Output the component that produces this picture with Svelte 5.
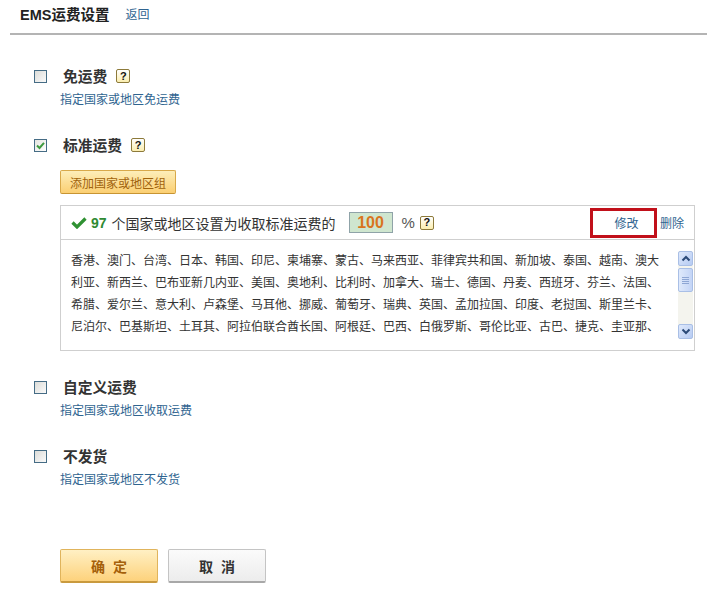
<script>
	const countries = '香港、澳门、台湾、日本、韩国、印尼、柬埔寨、蒙古、马来西亚、菲律宾共和国、新加坡、泰国、越南、澳大利亚、新西兰、巴布亚新几内亚、美国、奥地利、比利时、加拿大、瑞士、德国、丹麦、西班牙、芬兰、法国、希腊、爱尔兰、意大利、卢森堡、马耳他、挪威、葡萄牙、瑞典、英国、孟加拉国、印度、老挝国、斯里兰卡、尼泊尔、巴基斯坦、土耳其、阿拉伯联合酋长国、阿根廷、巴西、白俄罗斯、哥伦比亚、古巴、捷克、圭亚那、';
</script>

<div class="page">
	<header class="top">
		<h1>EMS运费设置</h1>
		<a href="#back">返回</a>
	</header>

	<section class="option">
		<div class="row">
			<span class="check"></span>
			<strong>免运费</strong>
			<span class="help">?</span>
		</div>
		<a class="desc" href="#free">指定国家或地区免运费</a>
	</section>

	<section class="option standard">
		<div class="row">
			<span class="check on">
				<svg viewBox="0 0 11 11" width="11" height="11"><path d="M2 5.5 4.5 8 9 2.8" fill="none" stroke="#3f9a3f" stroke-width="2" /></svg>
			</span>
			<strong>标准运费</strong>
			<span class="help">?</span>
		</div>
		<button class="add">添加国家或地区组</button>
		<div class="panel">
			<div class="panel-head">
				<svg class="tick" viewBox="0 0 16 13" width="16" height="13"><path d="M1.5 6.5 6 11 14.5 2.5" fill="none" stroke="#2f9132" stroke-width="3.2" /></svg>
				<b class="count">97</b>
				<span class="summary">个国家或地区设置为收取标准运费的</span>
				<span class="rate">100</span>
				<span class="pct">%</span>
				<span class="help">?</span>
				<a class="edit" href="#edit">修改</a>
				<a class="del" href="#delete">删除</a>
			</div>
			<div class="panel-body">
				<p class="list">{countries}</p>
				<div class="scrollbar">
					<span class="arrow">
						<svg viewBox="0 0 10 7" width="10" height="7"><path d="M1.5 5.5 5 2l3.5 3.5" fill="none" stroke="#2b4a78" stroke-width="2" /></svg>
					</span>
					<span class="thumb"><i></i><i></i><i></i><i></i></span>
					<span class="track"></span>
					<span class="arrow">
						<svg viewBox="0 0 10 7" width="10" height="7"><path d="M1.5 1.5 5 5l3.5-3.5" fill="none" stroke="#2b4a78" stroke-width="2" /></svg>
					</span>
				</div>
			</div>
		</div>
	</section>

	<section class="option">
		<div class="row">
			<span class="check"></span>
			<strong>自定义运费</strong>
		</div>
		<a class="desc" href="#custom">指定国家或地区收取运费</a>
	</section>

	<section class="option">
		<div class="row">
			<span class="check"></span>
			<strong>不发货</strong>
		</div>
		<a class="desc" href="#none">指定国家或地区不发货</a>
	</section>

	<div class="actions">
		<button class="btn ok">确 定</button>
		<button class="btn cancel">取 消</button>
	</div>
</div>

<style>
	:global(body) {
		margin: 0;
		background: #fff;
	}

	.page {
		width: 707px;
		height: 591px;
		overflow: hidden;
		font-family: "Liberation Sans", "Noto Sans CJK SC", sans-serif;
		font-size: 12px;
		color: #333;
	}

	a {
		color: #2f6490;
		text-decoration: none;
	}

	.top {
		display: flex;
		align-items: center;
		gap: 16px;
		height: 26px;
		margin-left: 10px;
		padding-left: 10px;
		border-bottom: 2px solid #b4b4b4;
		padding-bottom: 7px;
	}

	.top h1 {
		margin: 0;
		font-size: 14.5px;
		font-weight: 700;
		color: #222;
	}

	.option {
		padding: 31px 0 0 34px;
		height: 38px;
	}

	.option:first-of-type {
		margin-top: 31px;
		padding-top: 0;
	}

	.standard {
		height: 211px;
	}

	.row {
		display: flex;
		align-items: center;
		height: 20px;
	}

	.row strong {
		margin: -2px 0 0 16px;
		font-size: 14.75px;
		font-weight: 700;
		color: #333;
	}

	.row .help {
		margin-left: 9px;
	}

	.check {
		box-sizing: border-box;
		width: 13px;
		height: 13px;
		display: flex;
		align-items: center;
		justify-content: center;
		border: 1px solid #456c85;
		background: linear-gradient(135deg, #dcdcd8, #fafafa);
	}

	.check.on {
		background: linear-gradient(135deg, #e4e4e0, #fff);
	}

	.help {
		box-sizing: border-box;
		width: 14px;
		height: 14px;
		display: inline-flex;
		align-items: center;
		justify-content: center;
		border: 1px solid #8d7a3a;
		border-radius: 2px;
		background: linear-gradient(#fff, #fbeeb0);
		color: #111;
		font-size: 11px;
		font-weight: 700;
		line-height: 1;
	}

	.desc {
		display: block;
		margin: 5px 0 0 26px;
		line-height: 18px;
	}

	.add {
		display: block;
		box-sizing: border-box;
		width: 116px;
		height: 24px;
		margin: 15px 0 0 26px;
		padding: 0;
		border: 1px solid #d8a94a;
		border-bottom-color: #c79432;
		border-radius: 2px;
		background: linear-gradient(#fdeeb9, #fbcf72);
		color: #a0620c;
		font: inherit;
	}

	.panel {
		box-sizing: border-box;
		width: 635px;
		height: 146px;
		margin: 11px 0 0 26px;
		border: 1px solid #cfcfcf;
	}

	.panel-head {
		display: flex;
		align-items: center;
		height: 33px;
		padding-left: 10px;
		border-bottom: 1px solid #cfcfcf;
	}

	.tick {
		flex: none;
		margin-right: 4px;
	}

	.count {
		color: #2f8a33;
		font-size: 14px;
		margin-right: 5px;
	}

	.summary {
		font-size: 14px;
		color: #333;
	}

	.rate {
		box-sizing: border-box;
		width: 44px;
		height: 21px;
		margin-left: 13px;
		display: flex;
		align-items: center;
		justify-content: center;
		border: 1px solid #8fa3a8;
		background: #cfe6cf;
		color: #d9741e;
		font-size: 16px;
		font-weight: 700;
	}

	.pct {
		margin: 0 5px 0 9px;
		font-size: 15px;
		color: #555;
	}

	.edit {
		box-sizing: border-box;
		width: 67px;
		height: 30px;
		margin-left: auto;
		display: flex;
		align-items: center;
		justify-content: center;
		padding-left: 6px;
		border: 3px solid #c1101a;
	}

	.del {
		margin: 0 10px 0 3px;
	}

	.panel-body {
		display: flex;
		align-items: flex-start;
		justify-content: space-between;
		padding: 10px 1px 0 10px;
	}

	.list {
		margin: 0;
		width: 590px;
		height: 88px;
		overflow: hidden;
		line-height: 22px;
		font-size: 12px;
		color: #333;
	}

	.scrollbar {
		flex: none;
		width: 15px;
		height: 88px;
		margin-top: 1px;
		display: flex;
		flex-direction: column;
		background: #f4f4ee;
		border-radius: 2px;
	}

	.arrow {
		flex: none;
		box-sizing: border-box;
		height: 15px;
		display: flex;
		align-items: center;
		justify-content: center;
		border: 1px solid #a9bfe6;
		border-radius: 2px;
		background: linear-gradient(135deg, #dfe9fb, #b6cbf3);
	}

	.thumb {
		flex: none;
		box-sizing: border-box;
		height: 24px;
		margin-top: 2px;
		display: flex;
		flex-direction: column;
		align-items: center;
		justify-content: center;
		gap: 1px;
		border: 1px solid #a9bfe6;
		border-radius: 2px;
		background: linear-gradient(90deg, #dfe9fb, #c3d4f6);
	}

	.thumb i {
		width: 7px;
		height: 1px;
		background: #8ea6d4;
	}

	.track {
		flex: 1;
	}

	.actions {
		display: flex;
		gap: 10px;
		margin: 65px 0 0 60px;
	}

	.btn {
		box-sizing: border-box;
		width: 98px;
		height: 34px;
		padding: 0;
		border-radius: 2px;
		font: inherit;
		font-size: 14px;
		font-weight: 700;
		word-spacing: 4px;
	}

	.ok {
		border: 1px solid #e0b45c;
		border-bottom: 2px solid #c99a3e;
		background: linear-gradient(#fff0c4, #fdd27c);
		color: #a5600a;
	}

	.cancel {
		border: 1px solid #c4c4c4;
		border-bottom: 2px solid #a8a8a8;
		background: linear-gradient(#fbfbfb, #ececec);
		color: #333;
	}
</style>
